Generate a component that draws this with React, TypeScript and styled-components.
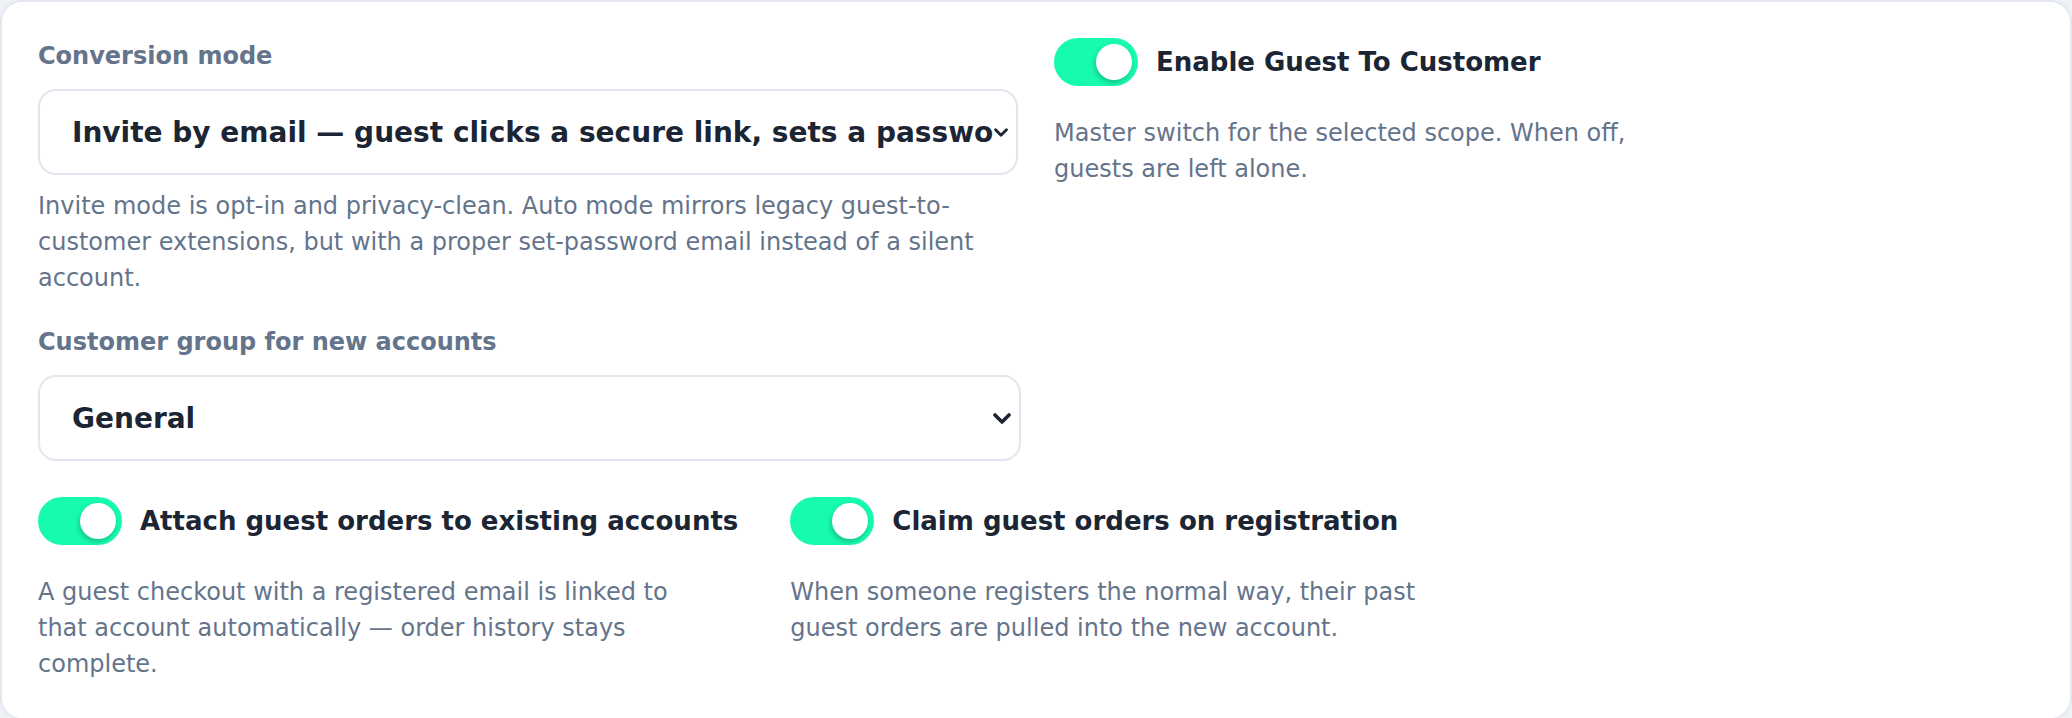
import React, { FC } from "react";
import styled, { createGlobalStyle } from "styled-components";

const GlobalStyle = createGlobalStyle`
  html, body {
    margin: 0;
    padding: 0;
    background: #eef1f6;
  }
  body {
    font-family: "DejaVu Sans", "Noto Sans", sans-serif;
  }
  * {
    box-sizing: border-box;
  }
`;

const Card = styled.section`
  background: #ffffff;
  border: 2px solid #e3e7ef;
  border-radius: 22px;
  padding: 36px;
  width: 2072px;
  min-height: 718px;
`;

const TopGrid = styled.div`
  display: grid;
  grid-template-columns: 1fr 1fr;
  column-gap: 36px;
  align-items: start;
`;

const Column = styled.div`
  display: flex;
  flex-direction: column;
  min-width: 0;
`;

const Field = styled.div`
  display: flex;
  flex-direction: column;

  & + & {
    margin-top: 28px;
  }
`;

const FieldLabel = styled.label`
  font-size: 24px;
  font-weight: 700;
  line-height: 36px;
  color: #64748b;
`;

const SelectBox = styled.div<{ $bleed?: number }>`
  display: flex;
  align-items: center;
  height: 86px;
  margin-top: 15px;
  margin-right: ${(p) => (p.$bleed ? `-${p.$bleed}px` : "0")};
  padding: 0 8px 0 32px;
  border: 2px solid #e2e7ef;
  border-radius: 18px;
  background: #ffffff;
  overflow: hidden;
`;

const SelectValue = styled.span`
  flex: 1;
  min-width: 0;
  overflow: hidden;
  white-space: nowrap;
  font-size: 28px;
  font-weight: 700;
  color: #1b2533;
`;

const Chevron = styled.svg`
  flex: none;
  display: block;
`;

const Help = styled.p<{ $gap?: number; $narrow?: boolean }>`
  margin: ${(p) => p.$gap ?? 13}px 0 0;
  max-width: ${(p) => (p.$narrow ? "640px" : "none")};
  font-size: 24px;
  line-height: 36px;
  color: #64748b;
`;

const BottomRow = styled.div`
  display: flex;
  align-items: flex-start;
  gap: 52px;
  margin-top: 36px;
`;

const ToggleItem = styled.div`
  display: flex;
  flex-direction: column;
`;

const ToggleRow = styled.div`
  display: flex;
  align-items: center;
  gap: 18px;
`;

const Switch = styled.span<{ $on: boolean }>`
  position: relative;
  flex: none;
  width: 84px;
  height: 48px;
  border-radius: 24px;
  background: ${(p) => (p.$on ? "#17fbac" : "#cbd5e1")};

  &::after {
    content: "";
    position: absolute;
    top: 6px;
    left: ${(p) => (p.$on ? "42px" : "6px")};
    width: 36px;
    height: 36px;
    border-radius: 50%;
    background: #ffffff;
    box-shadow: -1px 3px 5px rgba(15, 60, 45, 0.28);
  }
`;

const ToggleLabel = styled.span`
  font-size: 26px;
  font-weight: 700;
  color: #1b2533;
  white-space: nowrap;
`;

const Select: FC<{ value: string; chevron: number; bleed?: number }> = ({
  value,
  chevron,
  bleed,
}) => (
  <SelectBox $bleed={bleed}>
    <SelectValue>{value}</SelectValue>
    <Chevron
      width={chevron}
      height={Math.round(chevron * 0.62)}
      viewBox="0 0 18 11"
      fill="none"
    >
      <polyline
        points="2,2 9,9 16,2"
        stroke="#1b2533"
        strokeWidth="3.6"
        strokeLinecap="round"
        strokeLinejoin="round"
      />
    </Chevron>
  </SelectBox>
);

const Toggle: FC<{ label: string; help: string; on?: boolean }> = ({
  label,
  help,
  on = true,
}) => (
  <ToggleItem>
    <ToggleRow>
      <Switch $on={on} role="switch" aria-checked={on} />
      <ToggleLabel>{label}</ToggleLabel>
    </ToggleRow>
    <Help $gap={29} $narrow>
      {help}
    </Help>
  </ToggleItem>
);

export default function App() {
  return (
    <>
      <GlobalStyle />
      <Card>
        <TopGrid>
          <Column>
            <Field>
              <FieldLabel>Conversion mode</FieldLabel>
              <Select
                value="Invite by email — guest clicks a secure link, sets a password, account is created"
                chevron={14}
              />
              <Help>
                Invite mode is opt-in and privacy-clean. Auto mode mirrors legacy
                guest-to-customer extensions, but with a proper set-password email
                instead of a silent account.
              </Help>
            </Field>
            <Field>
              <FieldLabel>Customer group for new accounts</FieldLabel>
              <Select value="General" chevron={18} bleed={3} />
            </Field>
          </Column>
          <Column>
            <Toggle
              label="Enable Guest To Customer"
              help="Master switch for the selected scope. When off, guests are left alone."
            />
          </Column>
        </TopGrid>
        <BottomRow>
          <Toggle
            label="Attach guest orders to existing accounts"
            help="A guest checkout with a registered email is linked to that account automatically — order history stays complete."
          />
          <Toggle
            label="Claim guest orders on registration"
            help="When someone registers the normal way, their past guest orders are pulled into the new account."
          />
        </BottomRow>
      </Card>
    </>
  );
}
